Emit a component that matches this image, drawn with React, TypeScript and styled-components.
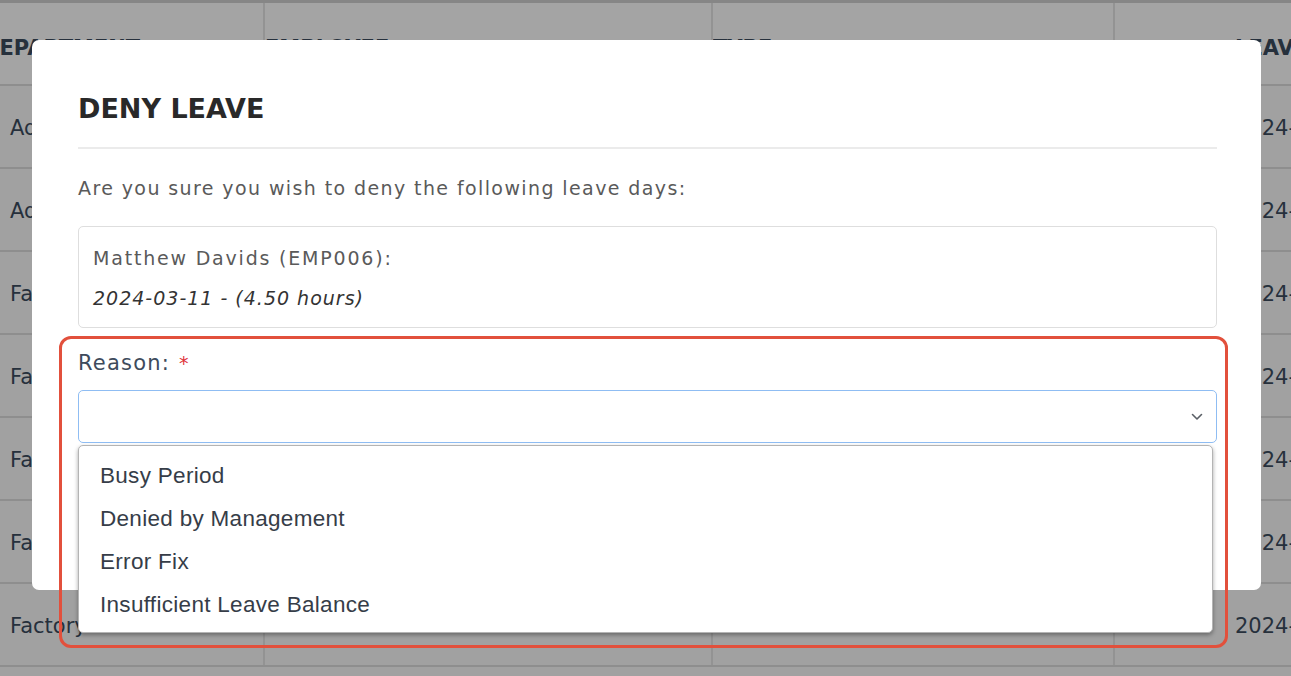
import React from 'react';
import styled, { createGlobalStyle } from 'styled-components';

const GlobalStyle = createGlobalStyle`
  html, body {
    margin: 0;
    padding: 0;
    overflow: hidden;
    background: #a1a1a1;
  }
  * {
    box-sizing: border-box;
  }
`;

const Page = styled.div`
  position: relative;
  width: 1291px;
  height: 676px;
  overflow: hidden;
  background: #a1a1a1;
  font-family: 'DejaVu Sans', 'Liberation Sans', sans-serif;
`;

const Backdrop = styled.div`
  display: flex;
  flex-direction: column;
  margin-left: -18px;
  border-top: 3px solid #868686;
`;

const TableRow = styled.div<{ $header?: boolean }>`
  display: grid;
  grid-template-columns: 283px 448px 402px 1fr;
  height: 83px;
  border-bottom: 2px solid #8e8e8e;
  background: ${(p) => (p.$header ? '#a4a4a4' : '#a1a1a1')};
`;

const Cell = styled.div<{ $header?: boolean; $pad?: number }>`
  display: flex;
  align-items: center;
  padding-left: ${(p) => p.$pad ?? 0}px;
  padding-top: ${(p) => (p.$header ? 8 : 2)}px;
  border-right: 2px solid #939393;
  font-size: 21px;
  font-weight: ${(p) => (p.$header ? 700 : 400)};
  color: #26303c;
  white-space: nowrap;
  overflow: hidden;

  &:last-child {
    border-right: none;
  }
`;

const Modal = styled.div`
  position: absolute;
  left: 32px;
  top: 40px;
  width: 1229px;
  height: 550px;
  background: #ffffff;
  border-radius: 7px;
  padding: 53px 44px 0 46px;
  display: flex;
  flex-direction: column;
`;

const Title = styled.h2`
  margin: 0;
  font-size: 27px;
  line-height: 32px;
  font-weight: 700;
  color: #292929;
`;

const Divider = styled.div`
  height: 2px;
  background: #ebebeb;
  margin-top: 22px;
`;

const Question = styled.p`
  margin: 27px 0 0;
  font-size: 19px;
  letter-spacing: 1.4px;
  line-height: 24px;
  color: #5a5a5a;
`;

const InfoBox = styled.div`
  margin-top: 26px;
  border: 1px solid #dedede;
  border-radius: 5px;
  padding: 11px 14px 9px;
`;

const InfoLine = styled.div<{ $italic?: boolean }>`
  font-size: 19px;
  line-height: 40px;
  letter-spacing: ${(p) => (p.$italic ? 1 : 1.8)}px;
  color: ${(p) => (p.$italic ? '#333333' : '#5a5a5a')};
  font-style: ${(p) => (p.$italic ? 'italic' : 'normal')};
`;

const Label = styled.label`
  margin-top: 23px;
  font-size: 21px;
  letter-spacing: 1.2px;
  line-height: 24px;
  color: #3e4b5c;
`;

const Required = styled.span`
  color: #e0343a;
  margin-left: 9px;
  font-size: 19px;
`;

const SelectWrap = styled.div`
  position: relative;
  margin-top: 15px;
`;

const SelectBox = styled.div`
  height: 53px;
  border: 1px solid #8fbdf3;
  border-radius: 5px;
  display: flex;
  align-items: center;
  justify-content: flex-end;
  padding-right: 13px;
  background: #ffffff;
`;

const Dropdown = styled.ul`
  position: absolute;
  left: 0;
  top: calc(100% + 2px);
  width: 1135px;
  height: 188px;
  margin: 0;
  padding: 8px 0 0;
  list-style: none;
  background: #ffffff;
  border: 1px solid #b4b4b4;
  border-radius: 5px;
  box-shadow: 0 2px 4px rgba(0, 0, 0, 0.35);
  z-index: 2;
`;

const Option = styled.li`
  padding-left: 21px;
  height: 43px;
  display: flex;
  align-items: center;
  font-family: 'Liberation Sans', Arial, sans-serif;
  font-size: 22.5px;
  letter-spacing: 0.3px;
  color: #363d48;
`;

const Highlight = styled.div`
  position: absolute;
  left: 59px;
  top: 336px;
  width: 1169px;
  height: 312px;
  border: 3px solid #e2503c;
  border-radius: 12px;
  pointer-events: none;
  z-index: 3;
`;

const Chevron = () => (
  <svg width="12" height="8" viewBox="0 0 12 8" fill="none">
    <path d="M1.5 1.5 L6 6 L10.5 1.5" stroke="#5a5f66" strokeWidth="1.6" strokeLinecap="round" strokeLinejoin="round" />
  </svg>
);

const rows = [
  { dept: 'Administration', date: '2024-03-11' },
  { dept: 'Administration', date: '2024-03-11' },
  { dept: 'Factory', date: '2024-03-11' },
  { dept: 'Factory', date: '2024-03-11' },
  { dept: 'Factory', date: '2024-03-11' },
  { dept: 'Factory', date: '2024-03-11' },
  { dept: 'Factory', date: '2024-03-11' },
];

const reasons = ['Busy Period', 'Denied by Management', 'Error Fix', 'Insufficient Leave Balance'];

const App = (): JSX.Element => {
  return (
    <Page>
      <GlobalStyle />
      <Backdrop>
        <TableRow $header>
          <Cell $header>DEPARTMENT</Cell>
          <Cell $header>EMPLOYEE</Cell>
          <Cell $header>TYPE</Cell>
          <Cell $header $pad={120}>LEAVE DATE</Cell>
        </TableRow>
        {rows.map((row, i) => (
          <TableRow key={i}>
            <Cell $pad={28}>{row.dept}</Cell>
            <Cell />
            <Cell />
            <Cell $pad={120}>{row.date}</Cell>
          </TableRow>
        ))}
      </Backdrop>

      <Modal>
        <Title>DENY LEAVE</Title>
        <Divider />
        <Question>Are you sure you wish to deny the following leave days:</Question>
        <InfoBox>
          <InfoLine>Matthew Davids (EMP006):</InfoLine>
          <InfoLine $italic>2024-03-11 - (4.50 hours)</InfoLine>
        </InfoBox>
        <Label>
          Reason:<Required>*</Required>
        </Label>
        <SelectWrap>
          <SelectBox>
            <Chevron />
          </SelectBox>
          <Dropdown>
            {reasons.map((reason) => (
              <Option key={reason}>{reason}</Option>
            ))}
          </Dropdown>
        </SelectWrap>
      </Modal>

      <Highlight />
    </Page>
  );
};

export default App;
